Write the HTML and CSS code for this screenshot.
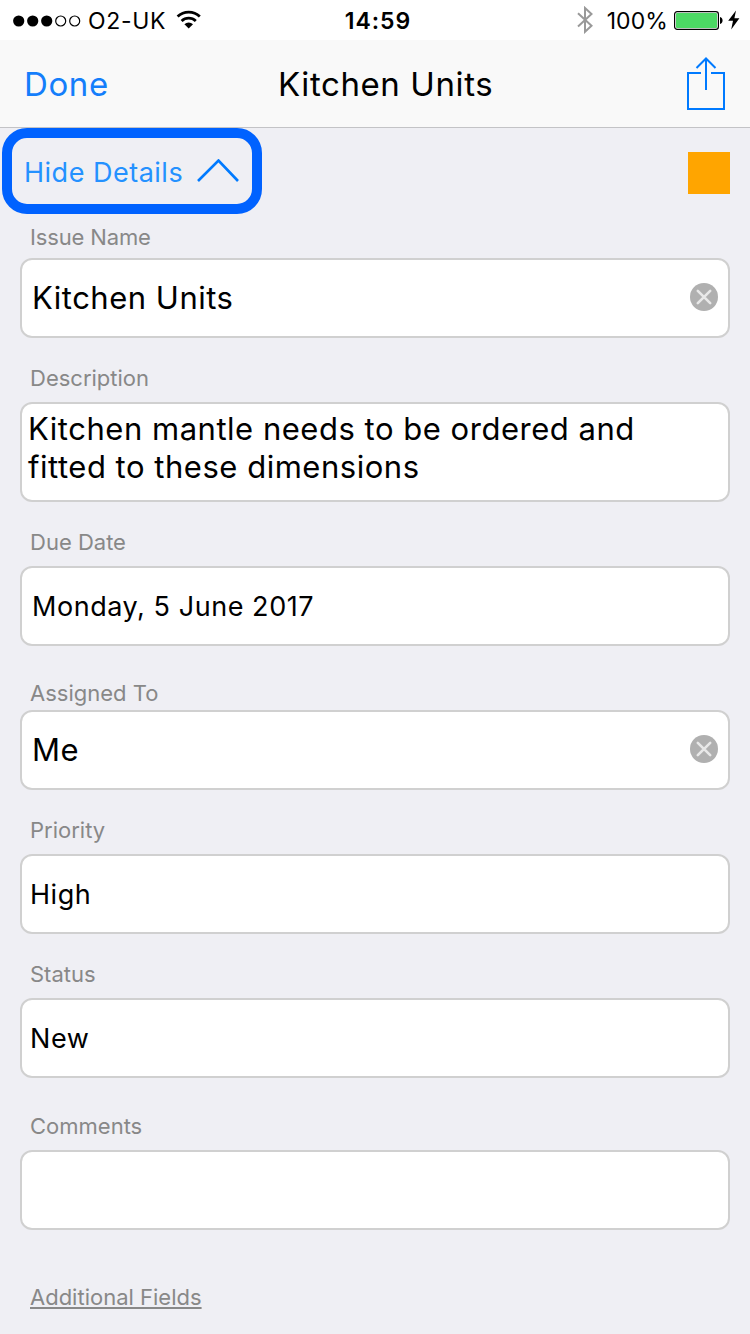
FILE: index.html
```html
<!DOCTYPE html>
<html lang="en">
<head>
  <meta charset="UTF-8">
  <meta name="viewport" content="width=device-width, initial-scale=1">
  <title>Kitchen Units</title>
  <link rel="stylesheet" href="styles.css">
</head>
<body>

<div class="status-bar">
  <div class="status-left">
    <svg class="signal" width="68" height="12" viewBox="0 0 68 12">
      <circle cx="5.7" cy="6" r="5.6"/>
      <circle cx="19.7" cy="6" r="5.6"/>
      <circle cx="33.7" cy="6" r="5.6"/>
      <circle class="empty" cx="47.7" cy="6" r="5"/>
      <circle class="empty" cx="61.7" cy="6" r="5"/>
    </svg>
    <span class="carrier">O2-UK</span>
    <svg class="wifi" width="26" height="20" viewBox="0 0 26 20">
      <path d="M1.6 6.6a16.2 16.2 0 0 1 22.2 0M5.6 11a10.4 10.4 0 0 1 14.2 0" fill="none" stroke="#000" stroke-width="2.8"/>
      <path d="M12.7 18.6l-4.3-4.4a6.2 6.2 0 0 1 8.6 0z"/>
    </svg>
  </div>
  <span class="time">14:59</span>
  <div class="status-right">
    <svg class="bluetooth" width="16" height="28" viewBox="0 0 16 28">
      <path d="M1 7.3l13.5 12.5L8 25.8V2l6.5 6L1 20.5" fill="none" stroke="#999" stroke-width="2"/>
    </svg>
    <span class="percent">100%</span>
    <svg class="battery" width="50" height="20" viewBox="0 0 50 20">
      <rect x=".6" y=".6" width="43.8" height="17.8" rx="2.6" fill="#fff" stroke="#000" stroke-width="1.2"/>
      <rect x="2" y="2" width="41" height="15" rx="1" fill="#4cd964"/>
      <path d="M46 6c3.4.6 3.4 6.4 0 7z"/>
    </svg>
    <svg class="bolt" width="12" height="20" viewBox="0 0 12 20">
      <path d="M8 .5L.2 10.7H5L3.2 19.5 11.4 8.3H6.4z"/>
    </svg>
  </div>
</div>

<div class="nav-bar">
  <a class="done">Done</a>
  <h1 class="title">Kitchen Units</h1>
  <svg class="share" width="40" height="54" viewBox="0 0 40 54">
    <path d="M15 16H2v36h36V16H25M20 33V1.5M10.5 11L20 1.5l9.5 9.5" fill="none" stroke="#007aff" stroke-width="2"/>
  </svg>
</div>

<div class="details-bar">
  <div class="toggle">
    <span>Hide Details</span>
    <svg width="42" height="24" viewBox="0 0 42 24">
      <path d="M1 22L21.500 1.500 41 22" fill="none" stroke="#007aff" stroke-width="2.6"/>
    </svg>
  </div>
  <div class="swatch"></div>
</div>

<div class="form">
  <label class="near">Issue Name</label>
  <div class="field large">
    <span>Kitchen Units</span>
    <svg class="clear" width="28" height="28" viewBox="0 0 28 28">
      <circle cx="14" cy="14" r="14"/>
      <path d="M7.8 7.8l12.4 12.4M20.2 7.8L7.8 20.2"/>
    </svg>
  </div>

  <label>Description</label>
  <div class="field area">Kitchen mantle needs to be ordered and fitted to these dimensions</div>

  <label>Due Date</label>
  <div class="field date">Monday, 5 June 2017</div>

  <label class="assigned">Assigned To</label>
  <div class="field large">
    <span>Me</span>
    <svg class="clear" width="28" height="28" viewBox="0 0 28 28">
      <circle cx="14" cy="14" r="14"/>
      <path d="M7.8 7.8l12.4 12.4M20.2 7.8L7.8 20.2"/>
    </svg>
  </div>

  <label>Priority</label>
  <div class="field">High</div>

  <label>Status</label>
  <div class="field">New</div>

  <label class="comments">Comments</label>
  <div class="field"></div>

  <a class="additional">Additional Fields</a>
</div>

</body>
</html>
```
FILE: styles.css
```css
* {
  box-sizing: border-box;
}
body {
  margin: 0;
  height: 1334px;
  overflow: hidden;
  font-family: Inter, "Liberation Sans", sans-serif;
  background: #efeff4;
  color: #000;
}
svg {
  display: block;
  flex: none;
}
.status-bar {
  display: grid;
  grid-template-columns: 1fr auto 1fr;
  align-items: center;
  height: 40px;
  padding: 0 10px 0 13px;
  background: #fff;
  font-size: 23px;
  line-height: 38px;
}
.status-bar span {
  padding-top: 2px;
}
.status-left, .status-right {
  display: flex;
  align-items: center;
}
.status-right {
  justify-content: flex-end;
}
.signal {
  margin-top: 1px;
}
.signal .empty {
  fill: none;
  stroke: #000;
  stroke-width: 1.2;
}
.carrier {
  margin: 0 10px 0 7px;
  letter-spacing: 0.7px;
}
.time {
  font-weight: 600;
  letter-spacing: 1px;
  margin-left: 3px;
}
.bluetooth {
  margin-right: 14px;
}
.percent {
  margin-right: 6px;
  letter-spacing: 0.1px;
}
.battery {
  margin-top: 1px;
}
.bolt {
  margin-left: 4px;
}
.nav-bar {
  display: grid;
  grid-template-columns: 254px 1fr auto;
  align-items: center;
  height: 88px;
  padding: 0 24px;
  background: #f9f9f9;
  border-bottom: 1px solid #c3c3c6;
}
.done {
  color: #147efb;
  font-size: 33px;
  letter-spacing: 0.6px;
}
.title {
  margin: 0;
  font-size: 33px;
  font-weight: 400;
  letter-spacing: 0.6px;
}
.details-bar {
  display: flex;
  justify-content: space-between;
  height: 95px;
  padding: 0 20px 0 2px;
}
.toggle {
  display: flex;
  align-items: center;
  justify-content: space-between;
  width: 260px;
  height: 86px;
  padding: 0 13px 0 12px;
  border: 10px solid #0062ff;
  border-radius: 25px;
  color: #2491ff;
  font-size: 27px;
  letter-spacing: 0.5px;
}
.toggle span {
  padding-top: 2px;
}
.swatch {
  width: 42px;
  height: 42px;
  margin-top: 24px;
  background: #ffa500;
}
.form {
  padding: 0 20px;
}
label {
  display: block;
  margin: 26px 0 10px 10px;
  color: #888;
  font-size: 22px;
  line-height: 28px;
}
label.near {
  margin-top: 0;
  margin-bottom: 7px;
  letter-spacing: -0.15px;
}
label.assigned {
  margin-top: 33px;
  margin-bottom: 3px;
}
label.comments {
  margin-top: 34px;
}
.field {
  display: flex;
  align-items: center;
  justify-content: space-between;
  height: 80px;
  padding: 0 10px 0 8px;
  background: #fff;
  border: 2px solid #d0d0d0;
  border-radius: 12px;
  font-size: 27px;
  letter-spacing: 0.55px;
}
.field.large {
  padding-left: 10px;
  font-size: 31px;
  letter-spacing: 0.5px;
}
.field.large span {
  padding-bottom: 2px;
}
.field.date {
  padding-left: 10px;
}
.field.area {
  display: block;
  height: 100px;
  padding: 6px 60px 0 6px;
  font-size: 31px;
  letter-spacing: 0.52px;
  line-height: 38px;
}
.clear {
  margin-top: -2px;
  fill: #b0b0b0;
}
.clear path {
  fill: none;
  stroke: #e8e8e8;
  stroke-width: 2.6;
  stroke-linecap: round;
}
.additional {
  display: block;
  margin: 53px 0 0 10px;
  color: #888;
  font-size: 22px;
  line-height: 28px;
  text-decoration: underline;
}
```
